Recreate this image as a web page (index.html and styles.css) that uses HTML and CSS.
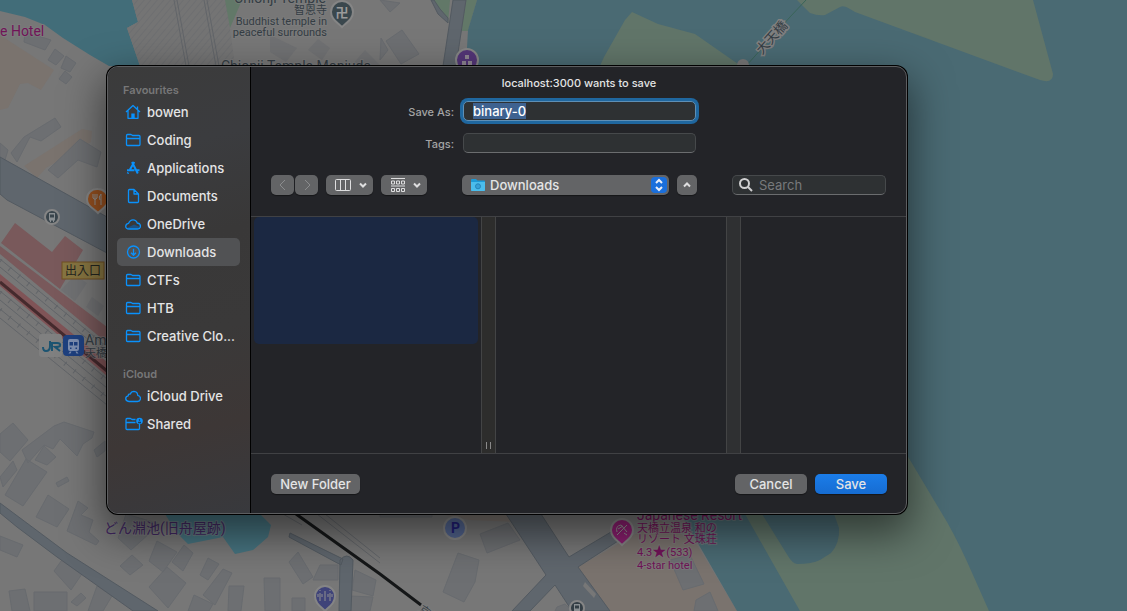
FILE: index.html
```html
<!DOCTYPE html>
<html lang="en">
<head>
<meta charset="utf-8">
<title>Save</title>
<link rel="stylesheet" href="styles.css">
</head>
<body>
<svg class="map" viewBox="0 0 1127 611" preserveAspectRatio="xMinYMin slice" aria-hidden="true">
  <defs>
    <pattern id="hatch" width="5" height="5" patternUnits="userSpaceOnUse" patternTransform="rotate(40)"><path class="hatch" d="M0 0V5"/></pattern>
  </defs>
  <rect class="land" width="1127" height="611"/>
  <path class="peach" d="M0 35 20 48 54 70 41 90 28 83 20 84 8 108 0 110ZM24 166 82 129 92 131 91 142 46 168 37 178ZM625 540 660 520 697 545 737 611H610L578 567ZM440 514H508L514 522 470 520Z"/>
  <path class="bay" d="M0 0H132L138 22 127 28 140 66H109L90 55 63 38 45 25 25 17 0 11Z"/>
  <path class="plot" d="M132 0H226L235 66H140L127 28 138 22Z"/>
  <path fill="url(#hatch)" d="M132 0H226L235 66H140L127 28 138 22Z"/>
  <path class="rail" d="M174 0 186 66M177 0 189 66M204 0 216 66M207 0 219 66"/>
  <path class="park" d="M225 0H242L230 28ZM434 0H450L448 23 440 12ZM466 0H477L468 31H461Z"/>
  <g class="building">
    <path d="M25 32 51 40 45 50 24 42ZM55 49 64 56 56 65 48 60ZM66 56 76 63 70 72 61 68ZM65 71 72 77 66 84 59 79ZM55 118 61 127 41 141 30 137 17 162 11 153 24 137ZM80 139 101 152 97 167 78 160 58 178 48 170ZM0 143 8 150 5 160 0 158Z"/>
    <path class="plain" d="M318 39 330 48 322 60 308 50ZM365 50 380 65H352ZM270 35 297 48 286 62 270 52Z"/>
    <path d="M402 30 419 54 401 64 386 41ZM381 38 388 50 380 60ZM380 0 400 3 390 12Z"/>
    <path d="M13 423 28 440 10 461 0 452V434ZM54 426 64 422 94 432 92 438 83 444 77 456 60 439 53 449 44 445 28 463 22 450ZM13 461 17 470 3 487 0 477ZM44 446 56 457 47 465 35 460ZM26 459 47 472 23 506 5 495ZM105 441V451L97 457 94 450ZM67 477 69 481 58 487 56 483ZM48 495 69 509 57 527 36 517ZM78 501 88 508 81 515 93 520 89 532 99 541 96 545 67 531ZM0 536 23 545 17 557 0 550ZM64 557 84 571 71 590 54 571ZM126 514 160 524 131 550 118 538ZM157 541 177 552 163 572 149 561ZM184 545 193 553 183 571 172 562ZM167 567 186 583 168 608 149 587ZM132 555 143 565 130 575 120 566ZM208 558 219 564 208 580 200 575ZM223 569 232 573 215 605 203 595ZM298 552 313 577 303 584 289 562ZM320 565H338V580H313ZM9 591 25 589 30 611H12ZM34 592H67V611H34ZM81 593 86 598 77 606 71 602ZM97 586 112 596 103 611H88ZM194 595 213 604 209 611H188ZM229 586H244L241 611H228ZM264 578H280V611H265ZM292 598H305V611H292ZM355 570 376 580 373 596 352 590ZM350 596 373 597 370 611H350Z"/>
    <path d="M480 534 508 523 520 540 487 553ZM458 553 479 560 475 582 464 602 443 592ZM670 560 690 555 704 584 683 590ZM696 600 710 592 718 611H694ZM380 514H432V517H380ZM557 607 565 604 572 611H555Z"/>
  </g>
  <g class="road">
    <path d="M0 157 77 200 107 217V253L7 200 0 194Z"/>
    <path d="M0 503 67 553 158 611H133L57 557 17 527 0 513Z"/>
    <path d="M453 0H466L456 66H443Z"/>
    <path d="M506 514H541L569 557 611 532 618 541 578 567 610 611H572L555 585 530 611H512L546 575Z"/>
    <path d="M340 560Q347 552 353 560L351 611H339ZM290 533 343 559 341 565 289 537Z"/>
  </g>
  <path class="road" d="M434 0 440 9 448 18 448 23 438 14 431 0Z"/>
  <path class="plaza" d="M585 582 596 594 594 598 583 586Z"/>
  <path class="pond" d="M165 514H260L271 525 268 537 253 550 235 554 223 537 188 544 177 533Z"/>
  <path class="station" d="M1 243 15 223 52 252 65 236 83 250 60 289ZM0 246 107 327V343L0 254Z"/>
  <path class="building plain" d="M75 275 87 283 75 301 61 290ZM92 297 104 306 98 316 86 307Z"/>
  <g class="rail">
    <path d="M0 259 107 347M0 267 107 355M0 291 107 379M0 300 107 388M0 309 107 397M0 318 107 405"/>
    <path class="ticks" d="M0 261 107 349M0 293 107 381M0 310 107 398"/>
  </g>
  <path class="redband" d="M0 274 107 362V376L0 286Z"/>
  <path class="redline" d="M0 282 107 371"/>
  <path class="rail" d="M283 514 302 525M317 514 380 563M325 514 380 558"/>
  <path class="track" d="M296 514 380 574 421 605"/>
  <path class="sea" d="M477 0H1127V611H737L681 514 600 300 466 66 468 30Z"/>
  <path class="isle" d="M632 12 658 24 695 34 738 64 741 68H599L604 57 625 20ZM797 0 810 13Q818 16 825 15L840 7Q844 5 850 9L855 12 1040 80Q1053 84 1053 74L1033 0ZM745 514 800 611H989L973 575Q960 545 947 522L907 455 880 500Z"/>
  <path class="sea" d="M762 514H834L839 528Q840 543 831 553L820 560Q812 564 797 564 792 563 788 556Z"/>
  <path class="ferry" d="M806 0 790 17 746 66"/>
  <circle class="plaza" cx="743" cy="65" r="6"/>

  <g class="pin">
    <path fill="#3a474d" d="M342 1A11 11 0 0 1 353 12C353 19 347 22 342 27 337 22 331 19 331 12A11 11 0 0 1 342 1Z"/>
    <text class="temple" x="342" y="17">卍</text>
    <circle fill="#533577" cx="467" cy="60" r="11"/>
    <path fill="#8d8591" stroke="none" d="M465 55h4v4h-4zM462 61h4v4h-4zM468 61h4v4h-4z"/>
    <path fill="#96501f" d="M98 189A10 10 0 0 1 108 199C108 206 103 208 98 213 93 208 87 206 87 199A10 10 0 0 1 98 189Z"/>
    <path class="mark" d="M93 194V198Q95 201 97 198V194M95 194V205M101 205V194Q98 197 100 200"/>
    <circle fill="#3a454c" cx="52" cy="217" r="7"/>
    <path fill="#8a8f92" stroke="none" fill-rule="evenodd" d="M49 213H55V220.500H54V222H53V220.500H51V222H50V220.500H49ZM50 214.500V217.500H54V214.500Z"/>
    <circle fill="#52648e" cx="455" cy="528" r="11"/>
    <path fill="#8c1f70" d="M622 519A11 11 0 0 1 633 530C633 537 627 540 622 545 617 540 611 537 611 530A11 11 0 0 1 622 519Z"/>
    <path class="mark" d="M617 532Q615 526 621 525L627 532M618 529 623 526M620 532 625 527M617 535 627 525M624 533 627 535"/>
    <path fill="#3f4379" d="M325 586A10 10 0 0 1 335 596C335 603 330 606 325 611 320 606 315 603 315 596A10 10 0 0 1 325 586Z"/>
    <path class="mark" d="M320 593V601M325 591V601M330 593V601M318 594V597M322 594V597M328 594V597M332 594V597M320 590V591M330 590V591"/>
    <circle fill="#343e45" cx="577" cy="608" r="7"/>
    <path fill="#8a8f92" stroke="none" fill-rule="evenodd" d="M574 604H580V611H574ZM575 605.500V608.500H579V605.500Z"/>
  </g>
  <rect class="jr" x="39" y="334" width="23" height="23" rx="3"/>
  <path class="jrmark" d="M43 347Q43 351 46 351 50 351 50 346V341M52 351V343H57Q61 343 60 346 59 347 55 347L60 351"/>
  <rect class="metro" x="63" y="335" width="21" height="21" rx="4"/>
  <path fill="#7d8eb0" fill-rule="evenodd" d="M70 339H77Q79 339 79 341V349Q79 351 77 351H70Q68 351 68 349V341Q68 339 70 339ZM69.500 342V345.500H73V342ZM74 342V345.500H77.500V342ZM70 347.500V349H71.500V347.500ZM75.500 347.500V349H77V347.500ZM70 351.500 68.500 353.500H70.500L71.500 351.500ZM75.500 351.500 76.500 353.500H78.500L77 351.500Z"/>
  <rect class="exit" x="62" y="262" width="42" height="17"/>
  <g class="label">
    <text class="big pink" x="0" y="36">e Hotel</text>
    <text class="big end" x="326" y="3">Chionji Temple</text>
    <text class="end" x="327" y="14">智恩寺</text>
    <text class="end" x="327" y="25">Buddhist temple in</text>
    <text class="end" x="327" y="36">peaceful surrounds</text>
    <text class="big" x="221" y="71">Chionji Temple Monjudo</text>
    <text class="dark" x="65" y="275">出入口</text>
    <text class="big" x="85" y="345">Am</text>
    <text x="85" y="357">天橋</text>
    <text class="big violet" x="104" y="533">どん淵池(旧舟屋跡)</text>
    <text class="parking" x="451" y="533">P</text>
    <text class="big pink" x="637" y="520">Japanese Resort</text>
    <text class="pink" x="637" y="532">天橋立温泉 和の</text>
    <text class="pink" x="637" y="543">リゾート 文珠荘</text>
    <text class="pink" x="637" y="556">4.3<tspan class="star">★</tspan>(533)</text>
    <text class="pink" x="637" y="569">4-star hotel</text>
    <text class="bridge" transform="translate(762 55) rotate(-48)">大天橋</text>
    <text transform="translate(418 611) rotate(35)">京都</text>
  </g>
</svg>

<svg class="sprites" aria-hidden="true">
  <symbol id="house" viewBox="0 0 16 16"><path d="M1 8 8 1.500 15 8M3 6.500V14.300H13V6.500M12.500 2.500V5"/><path class="solid" d="M6.300 9.500H9.700V14H6.300Z"/></symbol>
  <symbol id="folder" viewBox="0 0 16 16"><path d="M1.500 4V12.500Q1.500 13.500 2.500 13.500H14Q15 13.500 15 12.500V4.500Q15 3.500 14 3.500H7.500L6 2.500H2.500Q1.500 2.500 1.500 4ZM1.500 6.500H15"/></symbol>
  <symbol id="apps" viewBox="0 0 16 16"><path class="thick" d="M7 2 12.800 13.500M9.300 2 5 9.500M2 10.300H9.500M11.500 10.300H14.500M3.200 12.500 2.700 13.700"/></symbol>
  <symbol id="page" viewBox="0 0 16 16"><path d="M3.500 2.500Q3.500 1.500 4.500 1.500H9L13.500 6V13.500Q13.500 14.500 12.500 14.500H4.500Q3.500 14.500 3.500 13.500ZM9 1.500V6H13.500"/></symbol>
  <symbol id="cloud" viewBox="0 0 16 16"><path d="M4 13.500Q.7 13.300.7 10.600.8 8.200 3.200 7.800 3.300 5.800 5.300 6 6.200 3.300 9 3.300 12.600 3.500 12.700 7.300 15.500 7.800 15.500 10.500 15.300 13.500 12.500 13.500Z"/></symbol>
  <symbol id="onedrive" viewBox="0 0 16 16"><path class="tint" d="M2 12 9 8.500 15 11 13 13H4Z"/><path d="M4 13Q.7 13 .7 10.200.8 7.700 3.600 7.300 5 3.800 8 3.800 11.300 3.800 12.200 7 15.500 7.300 15.500 10.200 15.300 13 12.500 13Z"/></symbol>
  <symbol id="down" viewBox="0 0 16 16"><path d="M14.500 8A6 6 0 1 1 2.500 8 6 6 0 0 1 14.500 8ZM8.500 4.700V11M6 8.700 8.500 11.200 11 8.700"/></symbol>
  <symbol id="shared" viewBox="0 0 18 16"><path d="M10.500 3.500H7L5.500 2.500H2Q1 2.500 1 4V12.500Q1 13.500 2 13.500H13.500Q14.500 13.500 14.500 12.500V8M1 6.500H10.500"/><circle class="solid" cx="14.500" cy="5" r="3.300"/><path class="hole" d="M14.500 3.300V4.700M13 6.500H16"/></symbol>
</svg>

<main class="desktop">
  <form class="dialog" role="dialog" aria-label="Save file">
    <nav class="sidebar">
      <h2>Favourites</h2>
      <ul>
        <li><a href="#bowen"><svg><use href="#house"/></svg><span>bowen</span></a></li>
        <li><a href="#coding"><svg><use href="#folder"/></svg><span>Coding</span></a></li>
        <li><a href="#applications"><svg><use href="#apps"/></svg><span>Applications</span></a></li>
        <li><a href="#documents"><svg><use href="#page"/></svg><span>Documents</span></a></li>
        <li><a href="#onedrive-files"><svg><use href="#onedrive"/></svg><span>OneDrive</span></a></li>
        <li><a class="current" aria-current="page" href="#downloads"><svg><use href="#down"/></svg><span>Downloads</span></a></li>
        <li><a href="#ctfs"><svg><use href="#folder"/></svg><span>CTFs</span></a></li>
        <li><a href="#htb"><svg><use href="#folder"/></svg><span>HTB</span></a></li>
        <li><a href="#creative"><svg><use href="#folder"/></svg><span>Creative Clo...</span></a></li>
      </ul>
      <h2>iCloud</h2>
      <ul>
        <li><a href="#icloud"><svg><use href="#cloud"/></svg><span>iCloud Drive</span></a></li>
        <li><a href="#shared-files"><svg class="wide"><use href="#shared"/></svg><span>Shared</span></a></li>
      </ul>
    </nav>
    <section class="panel">
      <header class="fields">
        <h1>localhost:3000 wants to save</h1>
        <label for="name">Save As:</label>
        <input class="field name" id="name" type="text" value="binary-0" autocomplete="off" spellcheck="false">
        <label for="tags">Tags:</label>
        <input class="field" id="tags" type="text">
      </header>
      <div class="toolbar">
        <div class="tools">
          <div class="history">
            <button type="button" class="btn nav" aria-label="Back"><svg viewBox="0 0 10 12"><path d="M7 1 2 6 7 11"/></svg></button>
            <button type="button" class="btn nav" aria-label="Forward"><svg viewBox="0 0 10 12"><path d="M3 1 8 6 3 11"/></svg></button>
          </div>
          <button type="button" class="btn view" aria-label="Columns">
            <svg class="glyph" viewBox="0 0 16 14"><rect x=".5" y="1.500" width="15" height="11" rx="1"/><path d="M5.500 1.500V12.500M10.500 1.500V12.500"/></svg>
            <svg class="chev" viewBox="0 0 8 6"><path d="M1 1.500 4 4.500 7 1.500"/></svg>
          </button>
          <button type="button" class="btn view group" aria-label="Group">
            <svg class="glyph" viewBox="0 0 16 14"><path d="M1 .5H15M1 8H15"/><path d="M1.500 3H4.500V6H1.500ZM6.500 3H9.500V6H6.500ZM11.500 3H14.500V6H11.500ZM1.500 10.500H4.500V13.500H1.500ZM6.500 10.500H9.500V13.500H6.500ZM11.500 10.500H14.500V13.500H11.500Z"/></svg>
            <svg class="chev" viewBox="0 0 8 6"><path d="M1 1.500 4 4.500 7 1.500"/></svg>
          </button>
        </div>
        <div class="place">
          <svg class="bluefolder" viewBox="0 0 16 14"><path fill="#1d9ad6" d="M1 2Q1 1 2 1H6L7.500 2.500H14Q15 2.500 15 3.500V12Q15 13 14 13H2Q1 13 1 12Z"/><path fill="#4bbdec" d="M1 4H15V12Q15 13 14 13H2Q1 13 1 12Z"/><circle cx="8" cy="8.300" r="2.500" fill="#37a0d6" stroke="#2485b9"/></svg>
          <select aria-label="Location"><option>Downloads</option></select>
          <svg class="stepper" viewBox="0 0 16 16"><path d="M5 6 8 3 11 6M5 10 8 13 11 10"/></svg>
        </div>
        <button type="button" class="btn up" aria-label="Collapse"><svg class="chev" viewBox="0 0 8 6"><path d="M1 4.500 4 1.500 7 4.500"/></svg></button>
        <label class="search">
          <svg viewBox="0 0 14 14"><circle cx="5.500" cy="5.500" r="4.500"/><path d="M9 9 13 13"/></svg>
          <input type="search" placeholder="Search" aria-label="Search">
        </label>
      </div>
      <div class="columns">
        <div class="column"><div class="picked"></div></div>
        <div class="gutter warm"><span class="grip"></span></div>
        <div class="column"></div>
        <div class="gutter"></div>
        <div class="column last"></div>
      </div>
      <footer class="actions">
        <button type="button" class="btn text wide">New Folder</button>
        <span class="spacer"></span>
        <button type="button" class="btn text">Cancel</button>
        <button type="submit" class="btn text primary">Save</button>
      </footer>
    </section>
  </form>
</main>
<script src="script.js"></script>
</body>
</html>
```

FILE: styles.css
```css
* { box-sizing: border-box; }
body {
  margin: 0;
  min-height: 100vh;
  overflow: hidden;
  background: #4a6a73;
  color: #e4e4e5;
  font: 500 13px/16px Inter, "Noto Sans CJK JP", sans-serif;
}
h1, h2, ul { margin: 0; padding: 0; font-weight: inherit; }
ul { list-style: none; }
input, select, button { font: inherit; color: inherit; outline: none; }
svg { display: block; flex: none; }
.sprites { position: absolute; width: 0; height: 0; }

/* Map behind the dialog */
.map { position: absolute; top: 0; left: 0; width: 100%; height: 100%; }
.land { fill: #777777; }
.peach { fill: #7a736e; }
.bay { fill: #426d79; }
.sea { fill: #4a6a73; }
.pond { fill: #46737f; }
.isle { fill: #617569; }
.park { fill: #627868; }
.plot { fill: #747474; }
.hatch { stroke: #676a6e; stroke-width: 1; }
.building { fill: #6d6f72; stroke: #686b6f; stroke-width: 1; }
.plain { stroke: none; fill: #707173; }
.road { fill: #5f666d; stroke: #535a61; stroke-width: 1; }
.plaza { fill: #777777; }
.station { fill: #79595b; }
.rail { fill: none; stroke: #626569; stroke-width: 1; }
.ticks { stroke-width: 5; stroke-dasharray: 1 11; }
.redband { fill: #805457; }
.redline { fill: none; stroke: #452a2d; stroke-width: 3; }
.track { fill: none; stroke: #151718; stroke-width: 3; }
.ferry { fill: none; stroke: #3a6559; stroke-width: 1; }
.pin { stroke: #858585; stroke-width: 2; }
.mark { fill: none; stroke: #909090; stroke-width: 1; }
.temple {
  fill: #9a9a9a;
  stroke: none;
  text-anchor: middle;
  font: 700 13px "Noto Sans CJK JP", sans-serif;
}
.jr { fill: #808080; }
.jrmark { fill: none; stroke: #1c5471; stroke-width: 2; }
.metro { fill: #1e407f; }
.exit { fill: #877541; stroke: #705023; stroke-width: 1; }
.label {
  fill: #343d44;
  font: 400 11px Roboto, "Noto Sans CJK JP", sans-serif;
  stroke: #808080;
  stroke-opacity: 0.5;
  stroke-width: 2;
  paint-order: stroke;
}
.big { font-size: 14px; }
.end { text-anchor: end; }
.pink { fill: #711358; }
.star { font-size: 14px; }
.violet { fill: #422862; }
.dark { fill: #24251f; font-size: 12px; stroke: none; }
.bridge { font-size: 13px; stroke-opacity: 1; stroke-width: 3; }
.parking { fill: #211e78; font-size: 14px; font-weight: 700; stroke: none; }

/* Dialog */
.desktop { position: relative; padding: 66px 220px 0 107px; }
.dialog {
  display: flex;
  overflow: hidden;
  border: 1px solid #5d5e60;
  border-radius: 11px;
  background: #232428;
  box-shadow: 0 0 0 1px #000, 0 16px 40px 4px rgba(0, 0, 0, 0.5);
}
.sidebar {
  width: 143px;
  flex: none;
  padding: 15px 10px 15px 9px;
  border-right: 1px solid #000;
  background: linear-gradient(165deg, #3b3b3b, #3b3c3f 20%, #393838 40%, #3a3939 60%, #3d3736 80%, #38393d);
}
.sidebar h2 { padding-left: 6px; color: #777778; font-size: 11px; font-weight: 600; }
.sidebar ul + h2 { margin-top: 16px; }
.sidebar a {
  display: flex;
  align-items: center;
  gap: 6px;
  height: 28px;
  padding-left: 8px;
  border-radius: 5px;
  color: inherit;
  text-decoration: none;
  white-space: nowrap;
}
.sidebar .current { background: #515254; }
.sidebar svg { width: 16px; height: 16px; fill: none; stroke: #0a91fb; stroke-width: 1.3; stroke-linejoin: round; }
.sidebar .wide { width: 18px; margin-right: -2px; }
.solid { fill: #0a91fb; stroke: none; }
.tint { fill: #1c5284; stroke: none; }
.thick { stroke-width: 2; }
.hole { stroke: #1d3c5c; }

.panel { flex: 1; min-width: 0; display: flex; flex-direction: column; }
.fields {
  display: grid;
  grid-template-columns: 203px 233px;
  column-gap: 9px;
  row-gap: 12px;
  align-items: center;
  padding-top: 8px;
}
.fields h1 {
  grid-column: 1 / -1;
  margin-bottom: -2px;
  padding-left: 211px;
  font-size: 11px;
  text-align: center;
}
.fields label { padding-top: 1px; color: #a4a4a5; font-size: 11px; text-align: right; }
.field {
  height: 20px;
  padding: 0 9px;
  border: 1px solid #46494b;
  border-bottom-color: #6b6d6f;
  border-radius: 5px;
  background: #2e3133;
}
.name { border-color: #5e8fb5; box-shadow: 0 0 0 3px #1f679f; color: #fff; }
.name::selection { background: rgba(63, 99, 146, 0.99); color: #fff; }

.toolbar { display: flex; align-items: center; padding: 22px 20px 21px; }
.tools { display: flex; gap: 8px; width: 191px; flex: none; }
.history { display: flex; gap: 1px; }
.btn {
  display: flex;
  align-items: center;
  justify-content: center;
  height: 20px;
  padding: 0;
  border: 0;
  border-radius: 5px;
  background: #636466;
  box-shadow: 0 1px 1px rgba(0, 0, 0, 0.4);
}
.btn svg { fill: none; stroke: #dededf; }
.nav { width: 23px; }
.nav svg { width: 10px; height: 12px; stroke: #8b8c8e; }
.view { justify-content: space-between; width: 47px; padding: 0 6px 0 9px; }
.group { width: 46px; }
.view .glyph { width: 16px; height: 14px; }
.btn .chev { width: 8px; height: 6px; stroke-width: 2; }
.place { position: relative; width: 207px; flex: none; }
.place select {
  display: block;
  width: 100%;
  height: 20px;
  padding: 0 28px;
  border: 0;
  border-radius: 5px;
  background: #636466;
  appearance: none;
  box-shadow: 0 1px 1px rgba(0, 0, 0, 0.4);
}
.bluefolder { position: absolute; left: 8px; top: 3px; width: 16px; height: 14px; }
.stepper {
  position: absolute;
  right: 2px;
  top: 2px;
  width: 16px;
  height: 16px;
  border-radius: 4px;
  background: #1a6fdc;
  fill: none;
  stroke: #e8eefa;
  stroke-width: 2;
  pointer-events: none;
}
.up { width: 20px; margin-left: 8px; }
.search {
  display: flex;
  align-items: center;
  gap: 6px;
  width: 154px;
  height: 20px;
  margin-left: auto;
  padding-left: 6px;
  border: 1px solid #46494b;
  border-bottom-color: #6b6d6f;
  border-radius: 5px;
  background: #2e3133;
}
.search svg { width: 14px; height: 14px; fill: none; stroke: #d0d0d1; stroke-width: 2; }
.search input { flex: 1; min-width: 0; padding: 0; border: 0; background: none; appearance: none; }
.search input::placeholder { color: #77797b; font-weight: 400; opacity: 1; }

.columns { display: flex; height: 238px; border: solid #404144; border-width: 1px 0; }
.column { width: 230px; flex: none; padding: 0 3px; }
.last { flex: 1; }
.picked { height: 127px; border-radius: 5px; background: #1b2842; }
.gutter {
  display: flex;
  align-items: flex-end;
  justify-content: center;
  width: 15px;
  flex: none;
  padding-bottom: 4px;
  border: solid #434445;
  border-width: 0 1px;
  background: #2f3032;
}
.warm { background: #2d2d2c; }
.grip { width: 5px; height: 7px; border: solid #8a8a8a; border-width: 0 1px; }

.actions { display: flex; align-items: center; gap: 8px; padding: 20px 19px 19px 20px; }
.spacer { flex: 1; }
.text { width: 72px; }
.text.wide { width: 89px; }
.primary { background: linear-gradient(#1b7de9, #166cd2); }
```

FILE: script.js
```js
const nameField = document.getElementById("name");
nameField.focus();
nameField.select();
```
